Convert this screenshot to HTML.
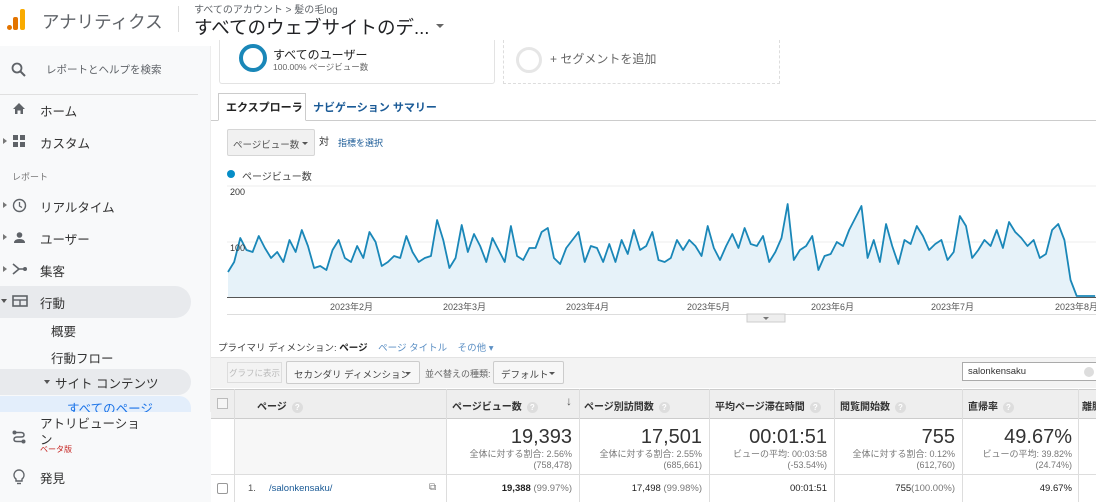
<!DOCTYPE html>
<html><head><meta charset="utf-8"><style>
*{margin:0;padding:0;box-sizing:border-box}
body{width:1096px;height:502px;overflow:hidden;background:#fff;font-family:"Liberation Sans","Noto Sans CJK JP",sans-serif;color:#333;position:relative}
.a{position:absolute;white-space:nowrap}
.side{position:absolute;left:0;top:46px;width:211px;height:456px;background:#f8f9fa;border-right:1px solid #eee}
.nav{font-size:12.5px;color:#333}
.hl{position:absolute;background:#e8eaed;border-radius:0 16px 16px 0}
.tri{position:absolute;width:0;height:0;border-left:4px solid #777;border-top:3px solid transparent;border-bottom:3px solid transparent}
.th{font-size:10px;font-weight:bold;color:#333}
.q{display:inline-block;width:11px;height:11px;border-radius:50%;background:#ddd;color:#fff;font-size:8px;text-align:center;line-height:11px;margin-left:5px;vertical-align:middle}
.num{font-size:20px;color:#333;text-align:right}
.sub{font-size:9px;color:#777;text-align:right;line-height:11px}
.vl{position:absolute;width:1px;background:#ddd}
.dd{position:absolute;border:1px solid #ccc;background:#f7f7f7;border-radius:2px;font-size:9.5px;color:#444;padding:5px 7px;white-space:nowrap}
.dd i{position:absolute;right:8px;top:10px;border-left:3.5px solid transparent;border-right:3.5px solid transparent;border-top:3.5px solid #555}
</style></head><body>
<!-- header -->
<svg class="a" style="left:7px;top:8px" width="20" height="26"><rect x="0" y="17" width="5" height="5" rx="2.5" fill="#e37400"/><rect x="6" y="9" width="5" height="13" rx="2" fill="#e37400"/><rect x="13" y="1" width="5" height="21" rx="2" fill="#f9ab00"/></svg>
<div class="a" style="left:42px;top:9px;font-size:17.5px;color:#5f6368">アナリティクス</div>
<div class="a" style="left:178px;top:6px;width:1px;height:26px;background:#ddd"></div>
<div class="a" style="left:194px;top:1px;font-size:10px;color:#5f6368">すべてのアカウント &gt; 髪の毛log</div>
<div class="a" style="left:194px;top:14px;font-size:18.5px;color:#202124">すべてのウェブサイトのデ...</div>
<div class="a" style="left:436px;top:24px;border-left:4px solid transparent;border-right:4px solid transparent;border-top:4px solid #666"></div>
<!-- sidebar -->
<div class="side"></div>
<div class="a" style="left:0;top:94px;width:198px;height:1px;background:#e0e0e0"></div>
<svg class="a" style="left:11px;top:62px" width="16" height="16"><circle cx="6" cy="6" r="4.5" fill="none" stroke="#5f6368" stroke-width="1.8"/><line x1="9.5" y1="9.5" x2="14" y2="14" stroke="#5f6368" stroke-width="2"/></svg>
<div class="a" style="left:46px;top:62px;font-size:10.5px;color:#5f6368">レポートとヘルプを検索</div>
<svg class="a" style="left:12px;top:102px" width="14" height="13"><path d="M7 1 L13 7 H11 V12 H8.5 V8.5 H5.5 V12 H3 V7 H1Z" fill="#5f6368"/></svg>
<div class="a nav" style="left:40px;top:101px">ホーム</div>
<div class="tri" style="left:3px;top:138px"></div>
<svg class="a" style="left:13px;top:135px" width="13" height="13"><rect x="0" y="0" width="5" height="5" fill="#5f6368"/><rect x="7" y="0" width="5" height="5" fill="#5f6368"/><rect x="0" y="7" width="5" height="5" fill="#5f6368"/><rect x="7" y="7" width="5" height="5" fill="#5f6368"/></svg>
<div class="a nav" style="left:40px;top:133px">カスタム</div>
<div class="a" style="left:12px;top:170px;font-size:9px;color:#777">レポート</div>
<div class="tri" style="left:3px;top:202px"></div>
<svg class="a" style="left:12px;top:198px" width="15" height="15"><circle cx="7.5" cy="7.5" r="6" fill="none" stroke="#5f6368" stroke-width="1.4"/><path d="M7.5 4 V8 L10 9.5" fill="none" stroke="#5f6368" stroke-width="1.3"/></svg>
<div class="a nav" style="left:40px;top:197px">リアルタイム</div>
<div class="tri" style="left:3px;top:234px"></div>
<svg class="a" style="left:13px;top:231px" width="13" height="13"><circle cx="6.5" cy="4" r="2.8" fill="#5f6368"/><path d="M1 12 Q1 8 6.5 8 Q12 8 12 12Z" fill="#5f6368"/></svg>
<div class="a nav" style="left:40px;top:229px">ユーザー</div>
<div class="tri" style="left:3px;top:266px"></div>
<svg class="a" style="left:12px;top:262px" width="16" height="14"><path d="M1 2 L7 7 L1 12 M7 7 H12" fill="none" stroke="#5f6368" stroke-width="1.6"/><circle cx="13" cy="7" r="2" fill="#5f6368"/></svg>
<div class="a nav" style="left:40px;top:261px">集客</div>
<div class="hl" style="left:0;top:286px;width:191px;height:32px"></div>
<div class="a" style="left:1px;top:299px;border-left:3.5px solid transparent;border-right:3.5px solid transparent;border-top:4px solid #555"></div>
<svg class="a" style="left:12px;top:295px" width="16" height="12"><rect x="1" y="1" width="14" height="10" fill="none" stroke="#5f6368" stroke-width="1.6"/><line x1="1" y1="5" x2="15" y2="5" stroke="#5f6368" stroke-width="1.4"/><line x1="8" y1="5" x2="8" y2="11" stroke="#5f6368" stroke-width="1.4"/></svg>
<div class="a nav" style="left:40px;top:293px">行動</div>
<div class="a nav" style="left:51px;top:321px">概要</div>
<div class="a nav" style="left:51px;top:348px">行動フロー</div>
<div class="hl" style="left:0;top:369px;width:191px;height:26px"></div>
<div class="a" style="left:44px;top:380px;border-left:3.5px solid transparent;border-right:3.5px solid transparent;border-top:4px solid #555"></div>
<div class="a nav" style="left:55px;top:373px">サイト コンテンツ</div>
<div class="a" style="left:0;top:396px;width:191px;height:16px;background:#e3eefb;border-radius:0 12px 0 0"></div>
<div class="a" style="left:67px;top:398px;font-size:12.5px;color:#1a73e8">すべてのページ</div>
<div class="a" style="left:0;top:412px;width:211px;height:90px;background:#f8f9fa"></div>
<svg class="a" style="left:12px;top:430px" width="14" height="14"><circle cx="2.5" cy="2.5" r="2" fill="#5f6368"/><circle cx="11.5" cy="11.5" r="2" fill="#5f6368"/><path d="M2.5 2.5 H9 Q12 2.5 12 5 Q12 7 9 7 H5 Q2 7 2 9.5 Q2 11.5 5 11.5 H11" fill="none" stroke="#5f6368" stroke-width="1.5"/></svg>
<div class="a nav" style="left:40px;top:413px">アトリビューショ</div>
<div class="a nav" style="left:40px;top:429px">ン</div>
<div class="a" style="left:40px;top:444px;font-size:8px;color:#c5221f">ベータ版</div>
<svg class="a" style="left:13px;top:469px" width="12" height="16"><path d="M6 1 A5 5 0 0 0 3 10 V12 H9 V10 A5 5 0 0 0 6 1Z" fill="none" stroke="#5f6368" stroke-width="1.4"/><line x1="4" y1="14.5" x2="8" y2="14.5" stroke="#5f6368" stroke-width="1.4"/></svg>
<div class="a nav" style="left:40px;top:468px">発見</div>
<!-- segments -->
<div class="a" style="left:219px;top:40px;width:276px;height:44px;border:1px solid #e3e3e3;border-top:none;border-radius:0 0 3px 3px"></div>
<div class="a" style="left:239px;top:44px;width:28px;height:28px;border-radius:50%;border:4px solid #1a87b8"></div>
<div class="a" style="left:273px;top:46px;font-size:12px;color:#222">すべてのユーザー</div>
<div class="a" style="left:273px;top:61px;font-size:8.5px;color:#666">100.00% ページビュー数</div>
<div class="a" style="left:503px;top:40px;width:277px;height:44px;border:1px dashed #ddd;border-top:none"></div>
<div class="a" style="left:516px;top:47px;width:26px;height:26px;border-radius:50%;border:3px solid #e6e6e6"></div>
<div class="a" style="left:550px;top:50px;font-size:12px;color:#666">+ セグメントを追加</div>
<!-- tabs -->
<div class="a" style="left:211px;top:120px;width:885px;height:1px;background:#ccc"></div>
<div class="a" style="left:218px;top:93px;width:88px;height:28px;border:1px solid #ccc;border-bottom:1px solid #fff;background:#fff"></div>
<div class="a" style="left:226px;top:99px;font-size:11px;font-weight:bold;color:#222">エクスプローラ</div>
<div class="a" style="left:313px;top:99px;font-size:11px;font-weight:bold;color:#1a5a96">ナビゲーション サマリー</div>
<!-- metric selector -->
<div class="a" style="left:227px;top:129px;width:88px;height:27px;background:#f1f1f1;border:1px solid #d6d6d6;border-radius:2px"></div>
<div class="a" style="left:233px;top:137px;font-size:9.5px;color:#555">ページビュー数</div>
<div class="a" style="left:302px;top:142px;border-left:3.5px solid transparent;border-right:3.5px solid transparent;border-top:3.5px solid #555"></div>
<div class="a" style="left:319px;top:133px;font-size:10px;color:#333">対</div>
<div class="a" style="left:338px;top:136px;font-size:9px;color:#1a5a96">指標を選択</div>
<div class="a" style="left:227px;top:170px;width:8px;height:8px;border-radius:50%;background:#058dc7"></div>
<div class="a" style="left:242px;top:168px;font-size:10px;color:#444">ページビュー数</div>
<!-- chart -->
<svg class="a" style="left:0;top:0" width="1096" height="330">
<line x1="227" y1="186" x2="1096" y2="186" stroke="#eee"/>
<line x1="227" y1="242" x2="1096" y2="242" stroke="#eee"/>
<g transform="translate(228,0) scale(6.15,1)">
<polygon fill="#e6f2f9" points="0,297 0,272 1,262 2,238 3,250 4,252 5,236 6,248 7,258 8,252 9,262 10,240 11,252 12,230 13,246 14,268 15,266 16,270 17,250 18,240 19,258 20,262 21,246 22,258 23,232 24,242 25,266 26,262 27,256 28,258 29,236 30,252 31,262 32,258 33,256 34,220 35,240 36,268 37,258 38,225 39,252 40,234 41,246 42,262 43,238 44,250 45,262 46,226 47,256 48,260 49,248 50,248 51,232 52,228 53,258 54,264 55,248 56,240 57,232 58,262 59,246 60,248 61,262 62,244 63,262 64,240 65,254 66,230 67,250 68,246 69,232 70,260 71,262 72,258 73,240 74,250 75,240 76,246 77,256 78,226 79,248 80,260 81,246 82,234 83,248 84,228 85,244 86,246 87,236 88,262 89,252 90,238 91,204 92,260 93,250 94,246 95,236 96,270 97,256 98,254 99,242 100,246 101,230 102,218 103,206 104,258 105,240 106,262 107,224 108,246 109,264 110,240 111,244 112,226 113,236 114,250 115,244 116,240 117,260 118,252 119,216 120,226 121,258 122,250 123,240 124,246 125,230 126,248 127,222 128,232 129,238 130,246 131,240 132,258 133,254 134,230 135,224 136,240 137,280 138,296 141,296 141,297"/>
<polyline fill="none" stroke="#1a87b8" stroke-width="1.8" vector-effect="non-scaling-stroke" stroke-linejoin="round" points="0,272 1,262 2,238 3,250 4,252 5,236 6,248 7,258 8,252 9,262 10,240 11,252 12,230 13,246 14,268 15,266 16,270 17,250 18,240 19,258 20,262 21,246 22,258 23,232 24,242 25,266 26,262 27,256 28,258 29,236 30,252 31,262 32,258 33,256 34,220 35,240 36,268 37,258 38,225 39,252 40,234 41,246 42,262 43,238 44,250 45,262 46,226 47,256 48,260 49,248 50,248 51,232 52,228 53,258 54,264 55,248 56,240 57,232 58,262 59,246 60,248 61,262 62,244 63,262 64,240 65,254 66,230 67,250 68,246 69,232 70,260 71,262 72,258 73,240 74,250 75,240 76,246 77,256 78,226 79,248 80,260 81,246 82,234 83,248 84,228 85,244 86,246 87,236 88,262 89,252 90,238 91,204 92,260 93,250 94,246 95,236 96,270 97,256 98,254 99,242 100,246 101,230 102,218 103,206 104,258 105,240 106,262 107,224 108,246 109,264 110,240 111,244 112,226 113,236 114,250 115,244 116,240 117,260 118,252 119,216 120,226 121,258 122,250 123,240 124,246 125,230 126,248 127,222 128,232 129,238 130,246 131,240 132,258 133,254 134,230 135,224 136,240 137,280 138,296 141,296"/>
</g>
<line x1="227" y1="297.5" x2="1096" y2="297.5" stroke="#555"/>
<line x1="227" y1="314.5" x2="1096" y2="314.5" stroke="#ddd"/>
<rect x="747" y="314" width="38" height="8" fill="#eee" stroke="#ccc"/>
<path d="M763 317 h6 l-3 3z" fill="#777"/>
</svg>
<div class="a" style="left:230px;top:187px;font-size:9px;color:#333">200</div>
<div class="a" style="left:230px;top:243px;font-size:9px;color:#333">100</div>
<div class="a" style="left:330px;top:300px;font-size:9px;color:#555">2023年2月</div>
<div class="a" style="left:443px;top:300px;font-size:9px;color:#555">2023年3月</div>
<div class="a" style="left:566px;top:300px;font-size:9px;color:#555">2023年4月</div>
<div class="a" style="left:687px;top:300px;font-size:9px;color:#555">2023年5月</div>
<div class="a" style="left:811px;top:300px;font-size:9px;color:#555">2023年6月</div>
<div class="a" style="left:931px;top:300px;font-size:9px;color:#555">2023年7月</div>
<div class="a" style="left:1055px;top:300px;font-size:9px;color:#555">2023年8月</div>
<!-- primary dimension -->
<div class="a" style="left:218px;top:340px;font-size:9.5px;color:#444">プライマリ ディメンション: <b style="color:#222;font-weight:bold">ページ</b>&nbsp;&nbsp;&nbsp; <span style="color:#5b8fc4">ページ タイトル</span>&nbsp;&nbsp;&nbsp; <span style="color:#5b8fc4">その他 ▾</span></div>
<div class="a" style="left:211px;top:357px;width:885px;height:31px;background:#f3f3f3;border-top:1px solid #e3e3e3"></div>
<div class="a" style="left:227px;top:362px;width:55px;height:21px;border:1px solid #ddd;font-size:8.5px;color:#bbb;padding:4px 1px;overflow:hidden">グラフに表示</div>
<div class="dd" style="left:286px;top:361px;width:134px;height:23px">セカンダリ ディメンション<i></i></div>
<div class="a" style="left:425px;top:367px;font-size:9px;color:#666">並べ替えの種類:</div>
<div class="dd" style="left:493px;top:361px;width:71px;height:23px">デフォルト<i></i></div>
<div class="a" style="left:962px;top:362px;width:140px;height:19px;border:1px solid #aaa;background:#fff;font-size:9.5px;color:#333;padding:3px 5px">salonkensaku</div>
<div class="a" style="left:1084px;top:367px;width:10px;height:10px;border-radius:50%;background:#ddd"></div>
<!-- table -->
<div class="a" style="left:211px;top:389px;width:885px;height:30px;background:#eeeeee;border-top:1px solid #ccc;border-bottom:1px solid #ccc"></div>
<div class="a" style="left:211px;top:474px;width:885px;height:1px;background:#ddd"></div>
<div class="a" style="left:211px;top:419px;width:24px;height:55px;background:#fff"></div>
<div class="a" style="left:235px;top:419px;width:211px;height:55px;background:#f7f7f7"></div>
<div class="a" style="left:446px;top:419px;width:650px;height:55px;background:#fff"></div>
<div class="vl" style="left:234px;top:389px;height:113px"></div>
<div class="vl" style="left:446px;top:389px;height:113px"></div>
<div class="vl" style="left:579px;top:389px;height:113px"></div>
<div class="vl" style="left:709px;top:389px;height:113px"></div>
<div class="vl" style="left:834px;top:389px;height:113px"></div>
<div class="vl" style="left:962px;top:389px;height:113px"></div>
<div class="vl" style="left:1078px;top:389px;height:113px"></div>
<div class="a" style="left:217px;top:398px;width:11px;height:11px;border:1px solid #bbb;background:#f5f5f5"></div>
<div class="a th" style="left:257px;top:398px">ページ<span class="q">?</span></div>
<div class="a th" style="left:452px;top:398px">ページビュー数<span class="q">?</span></div>
<div class="a" style="left:566px;top:394px;font-size:12px;color:#555">↓</div>
<div class="a th" style="left:584px;top:398px">ページ別訪問数<span class="q">?</span></div>
<div class="a th" style="left:715px;top:398px">平均ページ滞在時間<span class="q">?</span></div>
<div class="a th" style="left:840px;top:398px">閲覧開始数<span class="q">?</span></div>
<div class="a th" style="left:968px;top:398px">直帰率<span class="q">?</span></div>
<div class="a th" style="left:1082px;top:398px">離脱</div>
<div class="a" style="left:446px;top:426px;width:126px"><div class="num">19,393</div><div class="sub">全体に対する割合: 2.56%<br>(758,478)</div></div>
<div class="a" style="left:579px;top:426px;width:123px"><div class="num">17,501</div><div class="sub">全体に対する割合: 2.55%<br>(685,661)</div></div>
<div class="a" style="left:709px;top:426px;width:118px"><div class="num">00:01:51</div><div class="sub">ビューの平均: 00:03:58<br>(-53.54%)</div></div>
<div class="a" style="left:834px;top:426px;width:121px"><div class="num">755</div><div class="sub">全体に対する割合: 0.12%<br>(612,760)</div></div>
<div class="a" style="left:962px;top:426px;width:110px"><div class="num">49.67%</div><div class="sub">ビューの平均: 39.82%<br>(24.74%)</div></div>
<div class="a" style="left:217px;top:483px;width:11px;height:11px;border:1px solid #999;border-radius:2px;background:#fff"></div>
<div class="a" style="left:248px;top:483px;font-size:9.5px;color:#555">1.</div>
<div class="a" style="left:269px;top:483px;font-size:9.5px;color:#1a5a96">/salonkensaku/</div>
<div class="a" style="left:429px;top:482px;font-size:10px;color:#777">⧉</div>
<div class="a" style="left:446px;top:483px;width:126px;text-align:right;font-size:9.5px;color:#222"><b>19,388</b> <span style="color:#777">(99.97%)</span></div>
<div class="a" style="left:579px;top:483px;width:123px;text-align:right;font-size:9.5px;color:#222">17,498 <span style="color:#777">(99.98%)</span></div>
<div class="a" style="left:709px;top:483px;width:118px;text-align:right;font-size:9.5px;color:#222">00:01:51</div>
<div class="a" style="left:834px;top:483px;width:121px;text-align:right;font-size:9.5px;color:#222">755<span style="color:#777">(100.00%)</span></div>
<div class="a" style="left:962px;top:483px;width:110px;text-align:right;font-size:9.5px;color:#222">49.67%</div>
</body></html>
